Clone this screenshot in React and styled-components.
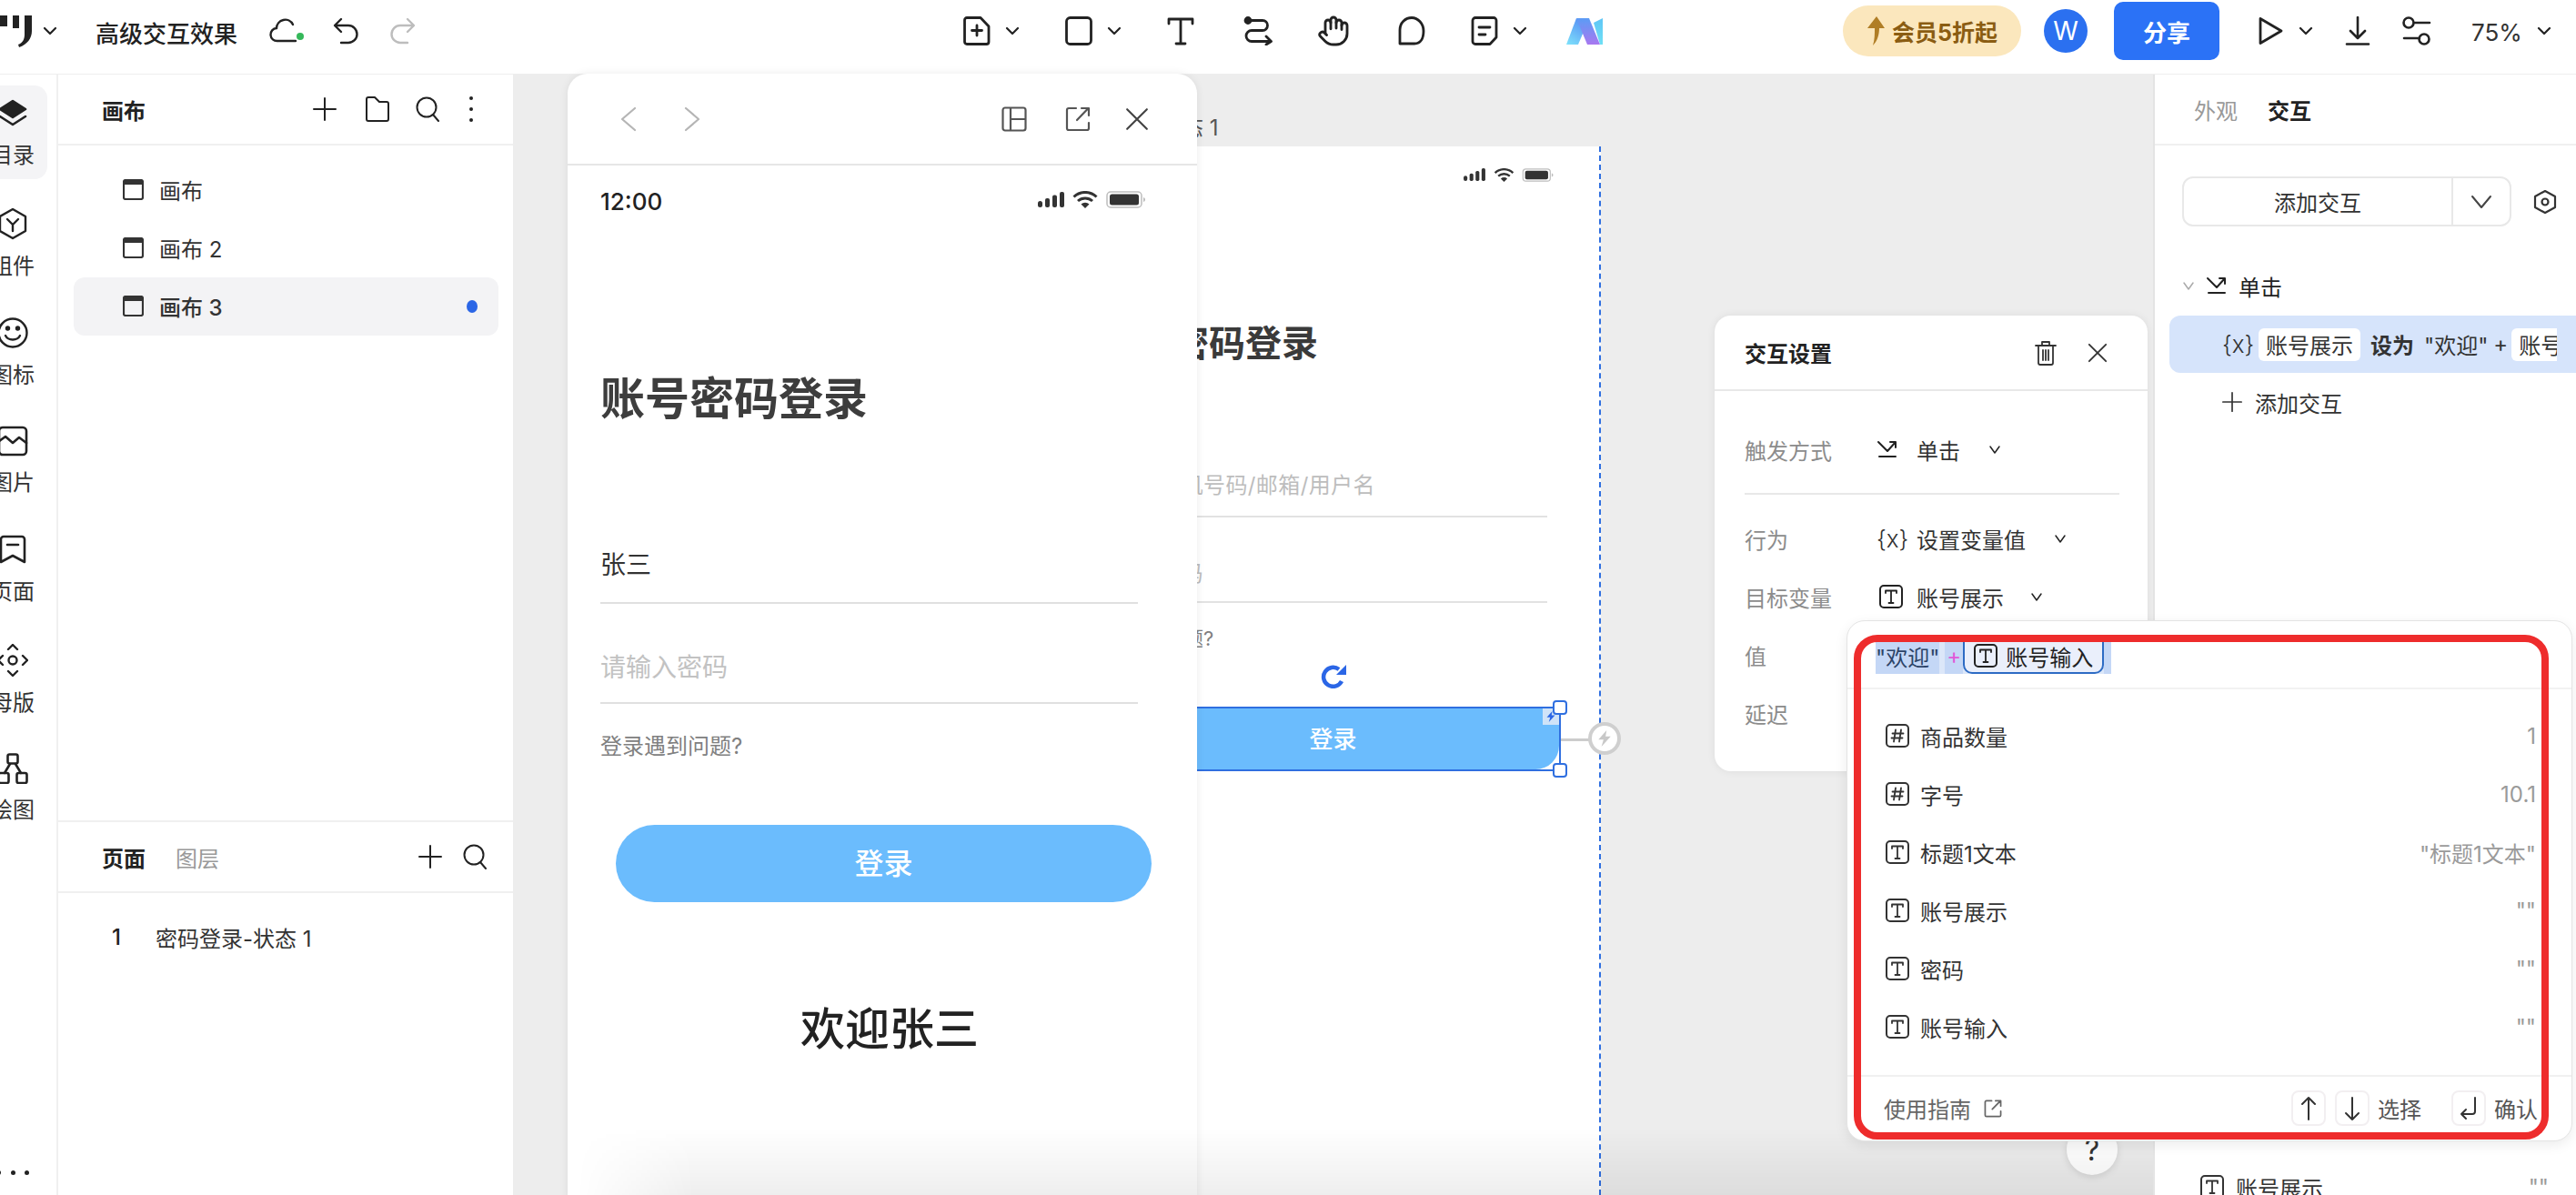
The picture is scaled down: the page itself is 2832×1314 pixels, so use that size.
import React from "react";
import styled, { createGlobalStyle } from "styled-components";
import { Hand } from "lucide-react";

const Global = createGlobalStyle`
  html, body { margin: 0; padding: 0; background: #fff; }
  body { font-family: Inter, "Noto Sans CJK SC", sans-serif; color: #222; }
  * { box-sizing: border-box; }
`;

const Page = styled.div`
  width: 2832px; height: 1314px; overflow: hidden; display: flex; flex-direction: column; background: #fff;
`;
const TopBar = styled.header`
  height: 82px; flex: none; display: flex; align-items: center; background: #fff; border-bottom: 1px solid #eee; padding-bottom: 13px;
`;
const Tool = styled.span`
  display: inline-flex; align-items: center; justify-content: center; flex: none;
  margin-left: ${p => p.$ml || 0}px; color: ${p => p.$c || "#222"};
`;
const Svg = styled.svg`
  display: block; flex: none; fill: none; stroke: currentColor; stroke-width: ${p => p.$w ?? 2.4};
  stroke-linecap: round; stroke-linejoin: round;
`;
const DocTitle = styled.span`
  margin-left: 42px; padding-top: 3px; font-size: 26px; font-weight: 500; width: 156px; white-space: nowrap; color: #222; flex: none;
`;
const Pill = styled.div`
  margin-left: ${p => p.$ml}px; width: 196px; height: 56px; border-radius: 28px; background: #fbe7bd; color: #8a5c12;
  display: flex; align-items: center; justify-content: center; gap: 8px; font-size: 25px; font-weight: 700; flex: none;
`;
const Avatar = styled.div`
  margin-left: 25px; width: 48px; height: 48px; border-radius: 50%; background: #2b70f0; color: #fff; flex: none;
  display: flex; align-items: center; justify-content: center; font-size: 28px;
`;
const Share = styled.button`
  margin-left: 29px; width: 116px; height: 64px; border: 0; border-radius: 10px; background: #2b72f6; color: #fff;
  font: 600 26px Inter, "Noto Sans CJK SC", sans-serif; flex: none;
`;
const Zoom = styled.span`
  margin-left: 44px; width: 56px; padding-top: 3px; font-size: 26px; color: #333; flex: none; white-space: nowrap;
`;

const Body = styled.div`
  flex: 1; min-height: 0; display: flex;
`;
const Rail = styled.nav`
  width: 64px; flex: none; overflow: hidden; border-right: 2px solid #f0f0f0; padding-top: 12px;
  display: flex; flex-direction: column; gap: 17px; background: #fff; position: relative; z-index: 1;
`;
const RailItem = styled.div`
  margin-left: -24px; width: 76px; height: 103px; flex: none; border-radius: 14px; padding-top: 14px;
  display: flex; flex-direction: column; align-items: center; background: ${p => (p.$on ? "#f4f4f6" : "transparent")};
`;
const RailLabel = styled.span`
  margin-top: 13px; font-size: 24px; line-height: 32px; color: #333; white-space: nowrap;
`;
const RailMore = styled.div`
  margin: auto 0 22px -4px; width: 36px; color: #222; display: flex; justify-content: space-between; flex: none;
`;
const Dot = styled.i`
  width: 5px; height: 5px; border-radius: 50%; background: #222; display: block;
`;

const LeftPanel = styled.aside`
  width: 500px; flex: none; background: #fff; display: flex; flex-direction: column; position: relative; z-index: 1;
`;
const Head = styled.div`
  height: 78px; flex: none; display: flex; align-items: center; padding-left: ${p => p.$pl || 48}px;
  border-bottom: 2px solid #f0f0f0;
`;
const HeadTitle = styled.span`
  font-size: 24px; font-weight: ${p => (p.$on ? 600 : 400)}; color: ${p => (p.$on ? "#222" : "#999")};
  margin-left: ${p => p.$ml || 0}px; flex: none;
`;
const Spacer = styled.span` flex: 1; `;
const CanvasList = styled.div`
  flex: 1; padding-top: 17px; display: flex; flex-direction: column;
`;
const CanvasRow = styled.div`
  margin-left: 17px; width: 467px; height: 64px; flex: none; border-radius: 12px; padding: 0 23px 1px 54px;
  display: flex; align-items: center; gap: 17px; font-size: 24px; color: #333;
  font-weight: ${p => (p.$on ? 500 : 400)}; background: ${p => (p.$on ? "#f3f3f5" : "transparent")};
`;
const BlueDot = styled.i`
  margin-left: auto; width: 12px; height: 14px; border-radius: 50%; background: #2b66e6; display: block;
`;
const LowerPanel = styled.div`
  height: 412px; flex: none; border-top: 2px solid #f0f0f0;
`;
const PageRow = styled.div`
  margin-top: 16px; height: 64px; padding-left: 59px; display: flex; align-items: center; font-size: 24px; color: #333;
`;
const PageNum = styled.b`
  width: 48px; font-weight: 500; color: #222;
`;

const Canvas = styled.main`
  flex: 1; min-width: 0; background: #ededed; position: relative; z-index: 2;
`;
const Artboard = styled.section`
  position: absolute; left: 604px; top: 79px; width: 592px; height: 1153px; background: #fff;
  border-right: 2px dashed #2f6fe0; padding-left: 33px;
`;
const BoardLabel = styled.span`
  position: absolute; left: 0; top: -40px; font-size: 24px; color: #555; white-space: nowrap;
`;
const BoardStatus = styled.div`
  height: 62px; width: 507px; display: flex; align-items: center; justify-content: flex-end; gap: 8px; color: #333;
`;
const BoardTitle = styled.h2`
  margin: 135px 0 0 8px; font-size: 40px; line-height: 40px; font-weight: 700; color: #3a3a3a;
`;
const BoardField = styled.div`
  margin-top: ${p => p.$mt}px; height: ${p => p.$h}px; width: 500px; border-bottom: 2px solid #e2e2e2;
  display: flex; align-items: center; font-size: 24px; color: #bdbdbd; letter-spacing: .4px;
`;
const BoardHelp = styled.div`
  margin: 28px 0 0 -10px; font-size: 22px; line-height: 22px; color: #808080;
`;
const RefreshWrap = styled.div`
  margin: 16px 0 0 251px; height: 28px; color: #2b66e6;
`;
const Selected = styled.div`
  position: relative; margin-top: 20px; width: 515px; height: 71px; border: 2px solid #2f6fe0; background: #fff;
`;
const SelectedFill = styled.div`
  width: 100%; height: 100%; background: #6bbcfd; border-radius: 0 0 26px 0; display: flex; align-items: center;
  justify-content: center; padding: 0 0 4px 14px; color: #fff; font-size: 26px; font-weight: 500;
`;
const Handle = styled.i`
  position: absolute; right: -9px; ${p => p.$pos}: -9px; width: 16px; height: 16px; border-radius: 4px;
  background: #fff; border: 2px solid #2f6fe0; display: block;
`;
const FlashBadge = styled.span`
  position: absolute; right: 0; top: 0; width: 18px; height: 18px; background: #cfe3f8; color: #2b66e6;
  display: flex; align-items: center; justify-content: center;
`;
const Connector = styled.i`
  position: absolute; left: 100%; top: 33px; width: 34px; height: 3px; margin-left: 2px; background: #ccc; display: block;
`;
const FlashCircle = styled.span`
  position: absolute; left: calc(100% + 32px); top: 15px; width: 36px; height: 36px; border-radius: 50%;
  border: 4px solid #cfcfcf; background: #fff; color: #c8c8c8; display: flex; align-items: center; justify-content: center;
`;

const Modal = styled.section`
  position: absolute; left: 60px; top: -1px; width: 692px; height: 1240px; background: #fff; overflow: hidden;
  border-radius: 22px 22px 0 0; box-shadow: 0 0 10px rgba(0,0,0,.08); z-index: 2;
`;
const ModalHead = styled.div`
  height: 101px; border-bottom: 2px solid #e6e6e6; display: flex; align-items: center; padding: 0 53px 0 58px; color: #444;
`;
const ModalBody = styled.div`
  padding-left: 36px;
`;
const StatusRow = styled.div`
  height: 81px; width: 599px; display: flex; align-items: center; padding-bottom: 2px; font-size: 26px; font-weight: 500; color: #222;
`;
const StatusIcons = styled.div`
  margin: -4px 0 0 auto; display: flex; align-items: center; gap: 9px; color: #333;
`;
const ModalTitle = styled.h1`
  margin: 151px 0 0; font-size: 49px; line-height: 50px; font-weight: 700; color: #3d3d3d; white-space: nowrap;
`;
const Field = styled.div`
  margin-top: ${p => p.$mt}px; height: ${p => p.$h}px; width: 591px; border-bottom: 2px solid #e0e0e0; padding-bottom: 2px;
  display: flex; align-items: center; font-size: 28px; color: ${p => p.$c};
`;
const Help = styled.div`
  margin-top: 35px; font-size: 24px; line-height: 24px; color: #808080;
`;
const LoginBtn = styled.div`
  margin: 74px 0 0 17px; width: 589px; height: 85px; border-radius: 43px; background: #6bbcfd; color: #fff;
  display: flex; align-items: center; justify-content: center; padding-bottom: 6px; font-size: 32px; font-weight: 500;
`;
const Welcome = styled.div`
  margin: 115px 0 0 220px; font-size: 49px; line-height: 50px; color: #222; font-weight: 500; white-space: nowrap;
`;

const Settings = styled.section`
  position: absolute; left: 1321px; top: 265px; width: 476px; height: 501px; background: #fff; border-radius: 18px;
  box-shadow: 0 0 10px rgba(0,0,0,.07); z-index: 2; padding-bottom: 12px;
`;
const SetHead = styled.div`
  height: 83px; border-bottom: 2px solid #e8e8e8; display: flex; align-items: center; padding: 0 44px 0 33px;
  font-size: 24px; font-weight: 600; color: #222;
`;
const SetRow = styled.div`
  margin-top: ${p => p.$mt || 0}px; height: 64px; padding-left: 33px; display: grid; grid-template-columns: 145px 1fr;
  align-items: center; font-size: 24px; color: #8c8c8c;
`;
const SetValue = styled.div`
  display: flex; align-items: center; color: #333;
`;
const Curly = styled.span`
  font-size: 26px; font-weight: 300; width: ${p => p.$w || 44}px; color: #333; flex: none;
`;
const IconCell = styled.span`
  width: 44px; flex: none; display: flex; color: #222; padding-left: ${p => p.$pl || 0}px;
`;
const SetDivider = styled.div`
  margin: 16px 31px 16px 33px; height: 2px; background: #e8e8e8;
`;

const Question = styled.div`
  position: absolute; left: 1708px; top: 1154px; width: 56px; height: 56px; border-radius: 50%; background: #fff;
  box-shadow: 0 2px 8px rgba(0,0,0,.12); display: flex; align-items: center; justify-content: center;
  font-size: 32px; color: #333; z-index: 3;
`;
const BottomShade = styled.div`
  position: absolute; left: 70px; right: 0; bottom: 0; height: 74px; z-index: 4; pointer-events: none;
  background: linear-gradient(to top, rgba(0,0,0,.065), rgba(0,0,0,0));
  -webkit-mask-image: linear-gradient(to right, transparent, #000 130px);
  mask-image: linear-gradient(to right, transparent, #000 130px);
`;

const Drop = styled.section`
  position: absolute; left: 1466px; top: 600px; width: 798px; height: 573px; background: #fff; border-radius: 20px;
  border: 1px solid #e4e4e4; box-shadow: 0 4px 14px rgba(0,0,0,.08); z-index: 5;
`;
const InputLine = styled.div`
  height: 75px; border-bottom: 2px solid #f2f2f2; padding: 20px 0 0 31px;
`;
const Highlight = styled.div`
  display: inline-flex; align-items: stretch; height: 38px; background: #dce7f9; font-size: 24px; color: #2d4468;
`;
const HlText = styled.span`
  background: #c4d7f6; display: flex; align-items: center; padding: 0 ${p => p.$px || 0}px 2px; margin-right: ${p => p.$mr || 0}px;
  color: ${p => p.$c || "inherit"}; white-space: nowrap;
`;
const Chip = styled.span`
  display: flex; align-items: center; gap: 9px; padding: 0 6px 0 10px; border: 2px solid #2d6bc4; border-top: 0;
  background: #eaeffb; border-radius: 0 0 10px 10px; color: #222; width: 155px; flex: none; white-space: nowrap;
`;
const HlTail = styled.span`
  width: 8px; background: #c4d7f6; flex: none;
`;
const DropList = styled.div`
  padding: 20px 0 20px;
`;
const DropRow = styled.div`
  height: 64px; padding: 0 39px 2px 42px; display: flex; align-items: center; gap: 12px; font-size: 24px; color: #333;
`;
const DropValue = styled.span`
  margin-left: auto; color: #9a9a9a; white-space: nowrap;
`;
const DropFoot = styled.div`
  height: 71px; border-top: 2px solid #f0f0f0; padding: 0 37px 0 40px; display: flex; align-items: center;
  font-size: 24px; color: #666;
`;
const KeyCap = styled.span`
  width: 38px; height: 39px; border: 2px solid #f2eff1; border-radius: 8px; display: flex; align-items: center;
  justify-content: center; margin-left: ${p => p.$ml || 0}px; color: #333; flex: none;
`;
const KeyText = styled.span`
  margin-left: ${p => p.$ml}px; color: #555; white-space: nowrap;
`;
const RedFrame = styled.div`
  position: absolute; left: 7px; top: 15px; width: 764px; height: 555px; border: 8px solid #ee2c2c; border-radius: 26px;
  pointer-events: none;
`;

const RightPanel = styled.aside`
  width: 465px; flex: none; background: #fff; border-left: 2px solid #e4e4e4; position: relative; z-index: 1; overflow: hidden;
`;
const AddRow = styled.div`
  margin: 34px 0 0 30px; display: flex; align-items: center;
`;
const AddBtn = styled.div`
  width: 362px; height: 55px; border: 2px solid #e8e8e8; border-radius: 12px; display: grid; grid-template-columns: 296px 1fr;
  font-size: 24px; color: #333; flex: none;
`;
const AddText = styled.span`
  display: flex; align-items: center; justify-content: center; border-right: 2px solid #e8e8e8;
`;
const AddCaret = styled.span`
  display: flex; align-items: center; justify-content: center; color: #444;
`;
const EventRow = styled.div`
  margin-top: 47px; height: 36px; padding-left: 30px; display: flex; align-items: center; font-size: 24px; color: #333;
`;
const ActionRow = styled.div`
  margin: 15px 0 0 16px; height: 63px; background: #d6e4fb; border-radius: 12px 0 0 12px; padding: 0 21px 0 58px; display: flex; align-items: center;
`;
const ActionInner = styled.div`
  display: flex; align-items: center; overflow: hidden; width: 368px; height: 36px; font-size: 24px; color: #333; white-space: nowrap;
`;
const MiniChip = styled.span`
  background: #fff; border-radius: 6px; height: 36px; display: flex; align-items: center; padding: 0 8px; flex: none;
  margin: 0 ${p => p.$mr || 0}px 0 ${p => p.$ml || 0}px;
`;
const ActionWord = styled.span`
  font-weight: ${p => (p.$b ? 600 : 400)}; margin-right: ${p => p.$mr || 0}px; flex: none;
`;
const AddLine = styled.div`
  margin-top: 12px; height: 40px; padding-left: 74px; display: flex; align-items: center; gap: 14px; font-size: 24px; color: #333;
`;
const VarRow = styled.div`
  margin-top: 823px; padding: 0 30px 0 50px; display: flex; align-items: center; gap: 13px; font-size: 24px; color: #333; height: 40px;
`;

const Chevron = ({ s = 16 }) => (
  <Svg width={s} height={s} viewBox="0 0 16 16" $w={2.2}>
    <path d="M2 5l6 6 6-6" />
  </Svg>
);
const TinyCaret = () => (
  <Svg width="14" height="14" viewBox="0 0 14 14" $w={1.5}><path d="M2 4l5 7 5-7" /></Svg>
);
const TIcon = ({ s = 26 }) => (
  <Svg width={s} height={s} viewBox="0 0 26 26" $w={2}>
    <rect x="1" y="1" width="24" height="24" rx="4" />
    <path d="M7 9V6.500h12V9M13 6.500V20M10.500 20h5" strokeWidth="1.800" />
  </Svg>
);
const HashIcon = () => (
  <Svg width="26" height="26" viewBox="0 0 26 26" $w={2}>
    <rect x="1" y="1" width="24" height="24" rx="4" />
    <path d="M11 6.500l-2 13M17 6.500l-2 13M7.500 10.500h12M6.500 15.500h12" strokeWidth="1.800" />
  </Svg>
);
const Trigger = () => (
  <Svg width="24" height="20" viewBox="0 0 24 20" $w={2}>
    <path d="M2 2l10 10 9-10M15 2h6v6M3 18h18" />
  </Svg>
);
const Plus = ({ s = 26, w = 2 }) => (
  <Svg width={s} height={s} viewBox="0 0 26 26" $w={w}><path d="M13 1v24M1 13h24" /></Svg>
);
const Search = () => (
  <Svg width="26" height="28" viewBox="0 0 26 28" $w={2}>
    <circle cx="12" cy="12" r="10.500" /><path d="M19 20l6 7" />
  </Svg>
);
const CanvasIcon = () => (
  <Svg width="23" height="23" viewBox="0 0 23 23" $w={2.2}>
    <rect x="1" y="1" width="21" height="21" rx="2" />
    <path d="M1 3.500h21" strokeWidth="5" strokeLinecap="butt" />
  </Svg>
);
const Close = ({ s = 24, w = 2 }) => (
  <Svg width={s} height={s} viewBox="0 0 24 24" $w={w}><path d="M2 2l20 20M22 2L2 22" /></Svg>
);
const External = ({ s = 28, w = 2.2 }) => (
  <Svg width={s} height={s} viewBox="0 0 28 28" $w={w}>
    <path d="M12 2H4a2 2 0 0 0-2 2v20a2 2 0 0 0 2 2h20a2 2 0 0 0 2-2v-6" />
    <path d="M13 15L25 2.500M18 2h8v8" />
  </Svg>
);
const Bolt = ({ s = 16 }) => (
  <Svg width={s} height={s} viewBox="0 0 16 16" $w={0} style={{ fill: "currentColor" }}>
    <path d="M10 0L2 9h5l-2 7 9-10H9z" />
  </Svg>
);
const Signal = ({ w = 29, h = 17 }) => (
  <svg width={w} height={h} viewBox="0 0 29 17" fill="currentColor" style={{ display: "block" }}>
    <rect x="0" y="10" width="5" height="7" rx="2.500" />
    <rect x="8" y="7" width="5" height="10" rx="2" />
    <rect x="16" y="3.500" width="5" height="13.500" rx="2" />
    <rect x="24" y="0" width="5" height="17" rx="2" />
  </svg>
);
const Wifi = ({ w = 28, h = 19 }) => (
  <svg width={w} height={h} viewBox="0 0 28 19" fill="none" stroke="currentColor" strokeWidth="3" style={{ display: "block" }}>
    <path d="M1.500 6.500a18 18 0 0 1 25 0M6 11a12 12 0 0 1 16 0" />
    <path d="M14 19l-4.500-4.500a6.500 6.500 0 0 1 9 0z" fill="currentColor" stroke="none" />
  </svg>
);
const Battery = ({ w = 43, h = 19 }) => (
  <svg width={w} height={h} viewBox="0 0 43 19" style={{ display: "block" }}>
    <rect x="1" y="1" width="38" height="17" rx="4" fill="none" stroke="#bdbdbd" strokeWidth="1.500" />
    <rect x="4" y="3.500" width="32" height="12" rx="2.500" fill="currentColor" />
    <path d="M41 7v5c1.500-.5 2-1.500 2-2.500S42.500 7.500 41 7z" fill="#bdbdbd" />
  </svg>
);

const rail = [
  { t: "目录", on: true, i: (
    <Svg width="34" height="34" viewBox="0 0 34 34" $w={2.6}>
      <path d="M17 3l14 9-14 9-14-9z" fill="currentColor" />
      <path d="M3 20l14 9 14-9" />
    </Svg>) },
  { t: "组件", i: (
    <Svg width="34" height="36" viewBox="0 0 34 36" $w={2.4}>
      <path d="M17 2l14 8v16l-14 8-14-8V10z" />
      <path d="M11 13l6 6 6-6M17 19v7" />
    </Svg>) },
  { t: "图标", i: (
    <Svg width="34" height="36" viewBox="0 0 34 36" $w={2.4}>
      <circle cx="17" cy="18" r="15.500" />
      <path d="M9 21c3 6 13 6 16 0" />
      <circle cx="11.500" cy="13" r="1.500" fill="currentColor" /><circle cx="22.500" cy="13" r="1.500" fill="currentColor" />
    </Svg>) },
  { t: "图片", i: (
    <Svg width="34" height="34" viewBox="0 0 34 34" $w={2.6}>
      <rect x="2" y="2" width="30" height="30" rx="4" />
      <path d="M2 17l7-5 8 7 7-6 8 6" />
    </Svg>) },
  { t: "页面", i: (
    <Svg width="34" height="34" viewBox="0 0 34 34" $w={2.6}>
      <path d="M4 30V5a3 3 0 0 1 3-3h20a3 3 0 0 1 3 3v25l-13-7z" />
      <path d="M11 11h12" />
    </Svg>) },
  { t: "母版", i: (
    <Svg width="34" height="36" viewBox="0 0 34 36" $w={2.4}>
      <circle cx="17" cy="18" r="4.500" />
      <path d="M12 6l5-5 5 5M12 30l5 5 5-5M6 13l-5 5 5 5M28 13l5 5-5 5" />
    </Svg>) },
  { t: "绘图", i: (
    <Svg width="34" height="34" viewBox="0 0 34 34" $w={2.6}>
      <rect x="11.500" y="1.500" width="11" height="10" rx="2" />
      <rect x="1.500" y="22" width="11" height="11" rx="2" />
      <rect x="21.500" y="22" width="11" height="11" rx="2" />
      <path d="M14 12l-6 10M20 12l6 10" />
    </Svg>) },
];

const vars = [
  { k: "h", n: "商品数量", v: "1" },
  { k: "h", n: "字号", v: "10.1" },
  { k: "t", n: "标题1文本", v: "\"标题1文本\"" },
  { k: "t", n: "账号展示", v: "\"\"" },
  { k: "t", n: "密码", v: "\"\"" },
  { k: "t", n: "账号输入", v: "\"\"" },
];

export default function App() {
  return (
    <Page>
      <Global />
      <TopBar>
        <Tool>
          <Svg width="36" height="36" viewBox="0 0 36 36" $w={0} style={{ fill: "#222" }}>
            <path d="M0 1h8v12H0zM14 1h7v14h-7zM27 1h8v17c0 8-5 15-14 18l-1-3c5-2 7-6 7-11z" />
          </Svg>
        </Tool>
        <Tool $ml={11}><Chevron /></Tool>
        <DocTitle>高级交互效果</DocTitle>
        <Tool $ml={34}>
          <svg width="40" height="30" viewBox="0 0 40 30" fill="none" stroke="#222" strokeWidth="2.400" strokeLinecap="round">
            <path d="M30 26H10a7 7 0 0 1-1-14 9.500 9.500 0 0 1 18-4" />
            <circle cx="35" cy="21" r="4" fill="#35b85a" stroke="none" />
          </svg>
        </Tool>
        <Tool $ml={30}>
          <Svg width="30" height="30" viewBox="0 0 30 30" $w={2.4}>
            <path d="M10 2L3 9l7 7M4 9h14a9.500 9.500 0 0 1 0 19h-8" />
          </Svg>
        </Tool>
        <Tool $ml={33} $c="#bdbdbd">
          <Svg width="30" height="30" viewBox="0 0 30 30" $w={2.4}>
            <path d="M20 2l7 7-7 7M26 9H12a9.500 9.500 0 0 0 0 19h8" />
          </Svg>
        </Tool>

        <Tool $ml={601}>
          <Svg width="30" height="32" viewBox="0 0 30 32" $w={2.8}>
            <path d="M4 1.500h15L28 11v17a2.500 2.500 0 0 1-2.500 2.500H4A2.500 2.500 0 0 1 1.500 28V4A2.500 2.500 0 0 1 4 1.500z" />
            <path d="M15 10v11M9.500 15.500h11" />
          </Svg>
        </Tool>
        <Tool $ml={16}><Chevron /></Tool>
        <Tool $ml={50}>
          <Svg width="30" height="32" viewBox="0 0 30 32" $w={2.8}><rect x="1.500" y="1.500" width="27" height="29" rx="4" /></Svg>
        </Tool>
        <Tool $ml={16}><Chevron /></Tool>
        <Tool $ml={50}>
          <Svg width="30" height="32" viewBox="0 0 30 32" $w={2.8}>
            <path d="M2 8V3h26v5M15 3v27M10 30h10" />
          </Svg>
        </Tool>
        <Tool $ml={54}>
          <Svg width="32" height="32" viewBox="0 0 32 32" $w={2.8}>
            <circle cx="5" cy="4.500" r="3" fill="currentColor" />
            <path d="M6 4.500h15a5.500 5.500 0 0 1 0 11H9a6 6 0 0 0 0 12h20M25 22l5.500 5.500L25 31" />
          </Svg>
        </Tool>
        <Tool $ml={49}><Hand size={36} strokeWidth={1.9} /></Tool>
        <Tool $ml={53}>
          <Svg width="30" height="32" viewBox="0 0 30 32" $w={2.8}>
            <path d="M2 30V15C2 7 8 1.500 15 1.500S28 8 28 16c0 8-3 14-10 14z" />
          </Svg>
        </Tool>
        <Tool $ml={50}>
          <Svg width="30" height="32" viewBox="0 0 30 32" $w={2.8}>
            <path d="M5 1.500h20a3 3 0 0 1 3 3V23l-7 7.500H5a3 3 0 0 1-3-3v-23a3 3 0 0 1 3-3z" />
            <path d="M9 12h12M9 20h7" />
          </Svg>
        </Tool>
        <Tool $ml={16}><Chevron /></Tool>
        <Tool $ml={43}>
          <svg width="40" height="29" viewBox="0 0 40 29">
            <defs>
              <linearGradient id="mA" x1="0" y1="1" x2=".5" y2="0"><stop offset="0" stopColor="#7fe3fb" /><stop offset="1" stopColor="#5a97f5" /></linearGradient>
              <linearGradient id="mB" x1="0" y1="0" x2="0" y2="1"><stop offset="0" stopColor="#5b9cf5" /><stop offset="1" stopColor="#a878f0" /></linearGradient>
              <linearGradient id="mC" x1="0" y1="0" x2="0" y2="1"><stop offset="0" stopColor="#5fc6f6" /><stop offset="1" stopColor="#6fe0f5" /></linearGradient>
            </defs>
            <path d="M11 0L0 29h13l8-19z" fill="url(#mA)" />
            <path d="M30 5l10-5v29h-3z" fill="url(#mC)" />
            <path d="M11 0h14l12 29H23z" fill="url(#mB)" />
          </svg>
        </Tool>

        <Pill $ml={264}>
          <svg width="20" height="32" viewBox="0 0 20 32"><path d="M11 0l9 13h-6c0 7-2 14-7 19 2-6 2-13 2-19H1z" fill="#b07e26" /></svg>
          <span>会员5折起</span>
        </Pill>
        <Avatar>W</Avatar>
        <Share>分享</Share>
        <Tool $ml={41}>
          <Svg width="30" height="32" viewBox="0 0 30 32" $w={2.8}><path d="M4 2.500L27 16 4 29.500z" /></Svg>
        </Tool>
        <Tool $ml={16}><Chevron /></Tool>
        <Tool $ml={34}>
          <Svg width="30" height="32" viewBox="0 0 30 32" $w={2.6}><path d="M15 1v23M7 16l8 8 8-8M3 30.500h24" /></Svg>
        </Tool>
        <Tool $ml={34}>
          <Svg width="32" height="32" viewBox="0 0 32 32" $w={2.6}>
            <circle cx="7" cy="7" r="5.500" /><path d="M13 7h17M2 24h17" /><circle cx="24" cy="25" r="5.500" />
          </Svg>
        </Tool>
        <Zoom>75%</Zoom>
        <Tool $ml={16}><Chevron /></Tool>
      </TopBar>

      <Body>
        <Rail>
          {rail.map(r => (
            <RailItem key={r.t} $on={r.on}>
              {r.i}
              <RailLabel>{r.t}</RailLabel>
            </RailItem>
          ))}
          <RailMore><Dot /><Dot /><Dot /></RailMore>
        </Rail>

        <LeftPanel>
          <Head>
            <HeadTitle $on>画布</HeadTitle>
            <Spacer />
            <Tool><Plus /></Tool>
            <Tool $ml={32}>
              <Svg width="26" height="28" viewBox="0 0 26 28" $w={2}>
                <path d="M1 3a2 2 0 0 1 2-2h7l5 5h8a2 2 0 0 1 2 2v17a2 2 0 0 1-2 2H3a2 2 0 0 1-2-2z" />
              </Svg>
            </Tool>
            <Tool $ml={29}><Search /></Tool>
            <Tool $ml={30}>
              <Svg width="10" height="32" viewBox="0 0 10 32" $w={0}>
                <circle cx="5" cy="4" r="2" fill="#222" /><circle cx="5" cy="16" r="2" fill="#222" /><circle cx="5" cy="28" r="2" fill="#222" />
              </Svg>
            </Tool>
            <Tool $ml={41} />
          </Head>
          <CanvasList>
            <CanvasRow><CanvasIcon />画布</CanvasRow>
            <CanvasRow><CanvasIcon />画布 2</CanvasRow>
            <CanvasRow $on><CanvasIcon />画布 3<BlueDot /></CanvasRow>
          </CanvasList>
          <LowerPanel>
            <Head>
              <HeadTitle $on>页面</HeadTitle>
              <HeadTitle $ml={33}>图层</HeadTitle>
              <Spacer />
              <Tool><Plus /></Tool>
              <Tool $ml={23}><Search /></Tool>
              <Tool $ml={29} />
            </Head>
            <PageRow><PageNum>1</PageNum>密码登录-状态 1</PageRow>
          </LowerPanel>
        </LeftPanel>

        <Canvas>
          <Artboard>
            <BoardLabel>密码登录-状态 1</BoardLabel>
            <BoardStatus>
              <Signal w={26} h={14} />
              <Wifi w={23} h={15} />
              <Battery w={35} h={15} />
            </BoardStatus>
            <BoardTitle>账号密码登录</BoardTitle>
            <BoardField $mt={97} $h={74}>请输入手机号码/邮箱/用户名</BoardField>
            <BoardField $mt={26} $h={68}>请输入密码</BoardField>
            <BoardHelp>登录遇到问题?</BoardHelp>
            <RefreshWrap>
              <Svg width="28" height="28" viewBox="0 0 28 28" $w={4.5}>
                <path d="M23 20a10.500 10.500 0 1 1-3-13" strokeLinecap="butt" />
                <path d="M28 2v11H17z" fill="currentColor" stroke="none" />
              </Svg>
            </RefreshWrap>
            <Selected>
              <SelectedFill>登录</SelectedFill>
              <FlashBadge><Bolt s={12} /></FlashBadge>
              <Handle $pos="top" />
              <Handle $pos="bottom" />
              <Connector />
              <FlashCircle><Bolt s={18} /></FlashCircle>
            </Selected>
          </Artboard>

          <Modal>
            <ModalHead>
              <Tool $c="#b5b5b5">
                <Svg width="18" height="28" viewBox="0 0 18 28" $w={2.2}><path d="M16 2L2 14l14 12" /></Svg>
              </Tool>
              <Tool $ml={52} $c="#b5b5b5">
                <Svg width="18" height="28" viewBox="0 0 18 28" $w={2.2}><path d="M2 2l14 12L2 26" /></Svg>
              </Tool>
              <Spacer />
              <Tool $c="#555">
                <Svg width="28" height="28" viewBox="0 0 28 28" $w={2.2}>
                  <rect x="1.500" y="1.500" width="25" height="25" rx="2.500" /><path d="M10 2v24M10 14h16" />
                </Svg>
              </Tool>
              <Tool $ml={42} $c="#555"><External /></Tool>
              <Tool $ml={38} $c="#444"><Close s={26} /></Tool>
            </ModalHead>
            <ModalBody>
              <StatusRow>
                12:00
                <StatusIcons><Signal /><Wifi /><Battery /></StatusIcons>
              </StatusRow>
              <ModalTitle>账号密码登录</ModalTitle>
              <Field $mt={114} $h={86} $c="#333">张三</Field>
              <Field $mt={30} $h={80} $c="#c2c2c2">请输入密码</Field>
              <Help>登录遇到问题?</Help>
              <LoginBtn>登录</LoginBtn>
              <Welcome>欢迎张三</Welcome>
            </ModalBody>
          </Modal>

          <Settings>
            <SetHead>
              交互设置
              <Spacer />
              <Tool $c="#333">
                <Svg width="24" height="28" viewBox="0 0 24 28" $w={2}>
                  <path d="M1 6h22M8 6V2h8v4M4 6v19a2 2 0 0 0 2 2h12a2 2 0 0 0 2-2V6M9 11v11M12 11v11M15 11v11" strokeWidth="1.800" />
                </Svg>
              </Tool>
              <Tool $ml={34} $c="#333"><Close s={22} w={2} /></Tool>
            </SetHead>
            <SetRow $mt={32}>
              触发方式
              <SetValue><IconCell><Trigger /></IconCell>单击<Tool $ml={31}><TinyCaret /></Tool></SetValue>
            </SetRow>
            <SetDivider />
            <SetRow>
              行为
              <SetValue><Curly>{"{x}"}</Curly>设置变量值<Tool $ml={31}><TinyCaret /></Tool></SetValue>
            </SetRow>
            <SetRow>
              目标变量
              <SetValue><IconCell $pl={3}><TIcon /></IconCell>账号展示<Tool $ml={29}><TinyCaret /></Tool></SetValue>
            </SetRow>
            <SetRow>值</SetRow>
            <SetRow>延迟</SetRow>
          </Settings>

          <Question>?</Question>
          <BottomShade />

          <Drop>
            <InputLine>
              <Highlight>
                <HlText $mr={6}>"欢迎"</HlText>
                <HlText $c="#e058d8" $px={2} $mr={0}>+</HlText>
                <Chip><TIcon />账号输入</Chip>
                <HlTail />
              </Highlight>
            </InputLine>
            <DropList>
              {vars.map(v => (
                <DropRow key={v.n}>
                  {v.k === "h" ? <HashIcon /> : <TIcon />}
                  {v.n}
                  <DropValue>{v.v}</DropValue>
                </DropRow>
              ))}
            </DropList>
            <DropFoot>
              使用指南
              <Tool $ml={14} $c="#666"><External s={20} w={2.4} /></Tool>
              <Spacer />
              <KeyCap>
                <Svg width="18" height="28" viewBox="0 0 18 28" $w={2}><path d="M9 26V2M2 9l7-7 7 7" /></Svg>
              </KeyCap>
              <KeyCap $ml={10}>
                <Svg width="18" height="28" viewBox="0 0 18 28" $w={2}><path d="M9 2v24M2 19l7 7 7-7" /></Svg>
              </KeyCap>
              <KeyText $ml={9}>选择</KeyText>
              <KeyCap $ml={33}>
                <Svg width="20" height="26" viewBox="0 0 20 26" $w={2}><path d="M17 1v15a3 3 0 0 1-3 3H2M7 14l-5 5 5 5" /></Svg>
              </KeyCap>
              <KeyText $ml={9}>确认</KeyText>
            </DropFoot>
            <RedFrame />
          </Drop>
        </Canvas>

        <RightPanel>
          <Head $pl={43}>
            <HeadTitle>外观</HeadTitle>
            <HeadTitle $on $ml={33}>交互</HeadTitle>
          </Head>
          <AddRow>
            <AddBtn>
              <AddText>添加交互</AddText>
              <AddCaret><Svg width="24" height="24" viewBox="0 0 24 24" $w={2}><path d="M2 6l10 12L22 6" /></Svg></AddCaret>
            </AddBtn>
            <Tool $ml={23} $c="#333">
              <Svg width="28" height="28" viewBox="0 0 28 28" $w={2.2}>
                <path d="M14 2l11 6v12l-11 6-11-6V8z" /><circle cx="14" cy="14" r="3.500" />
              </Svg>
            </Tool>
          </AddRow>
          <EventRow>
            <Tool $c="#aaa"><TinyCaret /></Tool>
            <Tool $ml={12}><Trigger /></Tool>
            <Tool $ml={12}>单击</Tool>
          </EventRow>
          <ActionRow>
            <ActionInner>
              <Curly $w={40}>{"{x}"}</Curly>
              <MiniChip $mr={11}>账号展示</MiniChip>
              <ActionWord $b $mr={11}>设为</ActionWord>
              <ActionWord $mr={6}>"欢迎"</ActionWord>
              <ActionWord $mr={4}>+</ActionWord>
              <MiniChip>账号输入</MiniChip>
            </ActionInner>
          </ActionRow>
          <AddLine><Plus s={22} />添加交互</AddLine>
          <VarRow>
            <TIcon />账号展示
            <DropValue>{"\"\""}</DropValue>
          </VarRow>
        </RightPanel>
      </Body>
    </Page>
  );
}
